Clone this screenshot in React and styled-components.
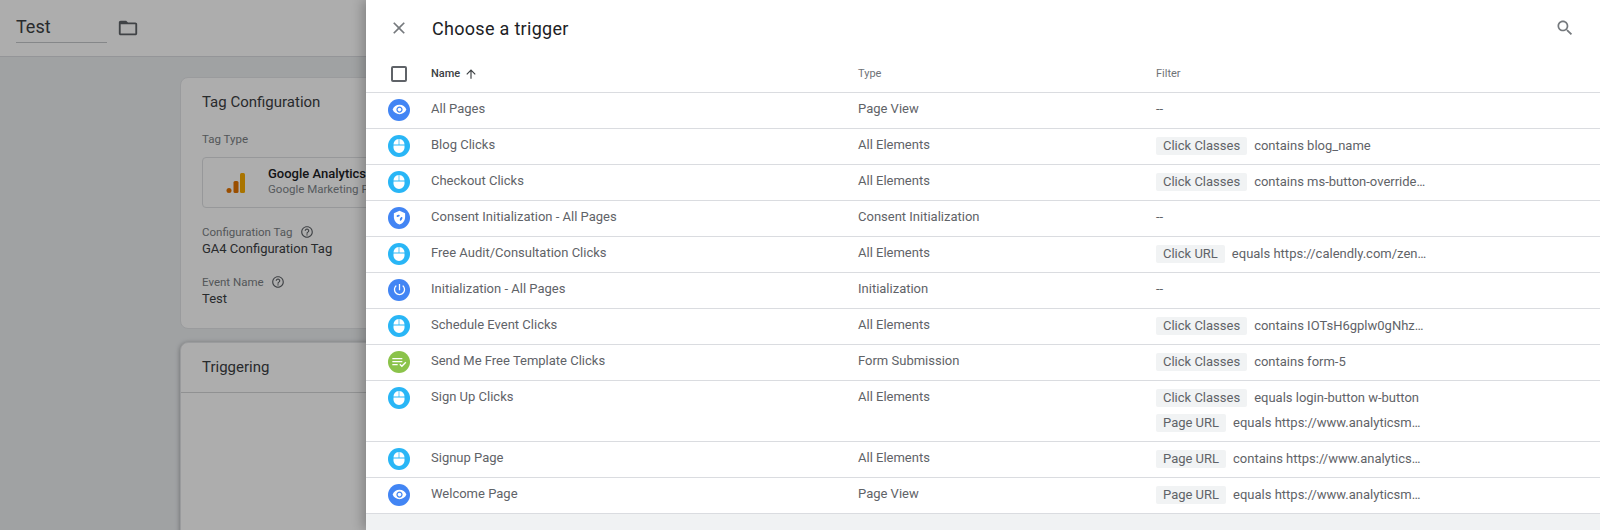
import React from 'react';
import styled, { createGlobalStyle } from 'styled-components';

const Global = createGlobalStyle`
html, body {
    margin: 0;
    height: 100%;
    overflow: hidden;
    background: #eceff1;
    font-family: Roboto, "Liberation Sans", sans-serif;
}
* { box-sizing: border-box; }
`;

const Page = styled.div`
position: relative;
width: 1600px;
height: 530px;
overflow: hidden;
`;

const TopBar = styled.header`
height: 57px;
background: #fff;
border-bottom: 1px solid #dadce0;
padding: 0 0 0 16px;
display: flex;
align-items: center;
gap: 10px;
`;
const NameField = styled.div`
width: 91px;
height: 30px;
border-bottom: 1px solid #c4c7ca;
font-size: 18px;
line-height: 28px;
color: #3c4043;
`;
const Content = styled.main`
padding: 20px 0 0 180px;
display: flex;
flex-direction: column;
gap: 13px;
`;
const Card = styled.section`
width: 700px;
height: ${p => p.$height}px;
background: #fff;
border-radius: 8px;
border: 1px solid #e3e5e7;
box-shadow: ${p => p.$raised ? '0 1px 5px rgba(0,0,0,.35)' : 'none'};
`;
const CardTitle = styled.h2`
margin: 0;
height: ${p => p.$rule ? 50 : 47}px;
padding: 14px 0 0 21px;
font-size: 15px;
line-height: 20px;
font-weight: 400;
color: #3c4043;
border-bottom: ${p => p.$rule ? '1px solid #d4d6d8' : 'none'};
`;
const CardBody = styled.div`
padding: 6px 0 0 21px;
`;
const Label = styled.div`
display: flex;
align-items: center;
gap: 7px;
height: 16px;
font-size: 11.5px;
color: #7b7f84;
`;
const Value = styled.div`
font-size: 13px;
line-height: 18px;
color: #3c4043;
`;
const Field = styled.div`
margin-top: 16px;
`;
const Tile = styled.div`
width: 400px;
height: 51px;
margin-top: 10px;
border: 1px solid #dfe1e3;
border-radius: 4px;
display: flex;
align-items: center;
padding-left: 23px;
gap: 22px;
`;
const TileText = styled.div`
margin-top: -3px;
`;
const TileName = styled.div`
font-size: 13px;
line-height: 16px;
font-weight: 500;
color: #202124;
`;
const TileSub = styled.div`
font-size: 11.5px;
line-height: 15px;
color: #80868b;
`;

const Scrim = styled.div`
position: absolute;
inset: 0;
background: rgba(0, 0, 0, .32);
`;
const Panel = styled.aside`
position: absolute;
top: 0;
bottom: 0;
left: 366px;
right: 0;
background: #f0f2f3;
box-shadow: -4px 0 10px rgba(0,0,0,.22);
display: flex;
flex-direction: column;
`;
const PanelHead = styled.div`
height: 56px;
background: #fff;
display: flex;
align-items: center;
padding: 0 25px 0 23px;
color: #75797d;
`;
const PanelTitle = styled.h1`
margin: 0 0 0 23px;
flex: 1;
font-size: 18px;
letter-spacing: .3px;
font-weight: 400;
color: #202124;
`;
const Table = styled.div`
background: #fff;
`;
const Row = styled.div`
display: grid;
grid-template-columns: 65px 427px 298px 1fr;
align-items: ${p => p.$multi ? 'start' : 'center'};
min-height: ${p => p.$head ? 37 : 36}px;
border-bottom: 1px solid #dadce0;
font-size: 13px;
line-height: 18px;
color: #5f6368;
padding: ${p => p.$multi ? '8px 0 9px' : p.$head ? 0 : '0 0 2px'};
`;
const Cell = styled.div`
margin: -1px 0 1px;
`;
const HeadCell = styled.div`
font-size: 11px;
color: ${p => p.$active ? '#3c4043' : '#6f7377'};
font-weight: ${p => p.$active ? 500 : 400};
display: flex;
align-items: center;
gap: 4px;
`;
const IconCell = styled.div`
display: flex;
justify-content: center;
width: 66px;
margin-top: ${p => p.$multi ? -2 : 0}px;
`;
const Checkbox = styled.span`
width: 16px;
height: 16px;
border: 2px solid #5f6368;
border-radius: 2px;
`;
const Badge = styled.span`
width: 22px;
height: 22px;
border-radius: 50%;
background: ${p => p.$color};
display: flex;
align-items: center;
justify-content: center;
`;
const Filters = styled.div`
display: flex;
flex-direction: column;
gap: 7px;
`;
const FilterLine = styled.div`
display: flex;
align-items: center;
gap: 7px;
white-space: nowrap;
`;
const Chip = styled.span`
background: #f1f3f4;
height: 18px;
line-height: 18px;
padding: 0 7px;
border-radius: 2px;
`;

const Glyph = ({ d, size = 24, color = 'currentColor' }) => (
    <svg width={size} height={size} viewBox="0 0 24 24" fill={color}><path d={d} /></svg>
);

const paths = {
    eye: 'M12 4.5C7 4.5 2.73 7.61 1 12c1.73 4.39 6 7.5 11 7.5s9.27-3.11 11-7.5c-1.73-4.39-6-7.5-11-7.5zM12 17c-2.76 0-5-2.24-5-5s2.24-5 5-5 5 2.24 5 5-2.24 5-5 5zm0-8c-1.66 0-3 1.34-3 3s1.34 3 3 3 3-1.34 3-3-1.34-3-3-3z',
    power: 'M13 3h-2v10h2V3zm4.83 2.17l-1.42 1.42C17.99 7.86 19 9.81 19 12c0 3.87-3.13 7-7 7s-7-3.13-7-7c0-2.19 1.01-4.14 2.58-5.42L6.17 5.17C4.23 6.82 3 9.26 3 12c0 4.97 4.03 9 9 9s9-4.03 9-9c0-2.74-1.23-5.18-3.17-6.83z',
    close: 'M19 6.41L17.59 5 12 10.59 6.41 5 5 6.41 10.59 12 5 17.59 6.41 19 12 13.41 17.59 19 19 17.59 13.41 12z',
    search: 'M15.5 14h-.79l-.28-.27C15.41 12.59 16 11.11 16 9.5 16 5.91 13.09 3 9.5 3S3 5.91 3 9.5 5.91 16 9.5 16c1.61 0 3.09-.59 4.23-1.57l.27.28v.79l5 4.99L20.49 19l-4.99-5zm-6 0C7.01 14 5 11.99 5 9.5S7.01 5 9.5 5 14 7.01 14 9.5 11.99 14 9.5 14z',
    folder: 'M20 6h-8l-2-2H4c-1.1 0-1.99.9-1.99 2L2 18c0 1.1.9 2 2 2h16c1.1 0 2-.9 2-2V8c0-1.1-.9-2-2-2zm0 12H4V8h16v10z',
    up: 'M4 12l1.41 1.41L11 7.83V20h2V7.83l5.58 5.59L20 12l-8-8-8 8z',
    help: 'M11 18h2v-2h-2v2zm1-16C6.48 2 2 6.48 2 12s4.48 10 10 10 10-4.48 10-10S17.52 2 12 2zm0 18c-4.41 0-8-3.59-8-8s3.59-8 8-8 8 3.59 8 8-3.59 8-8 8zm0-14c-2.21 0-4 1.79-4 4h2c0-1.1.9-2 2-2s2 .9 2 2c0 2-3 1.75-3 5h2c0-2.25 3-2.5 3-5 0-2.21-1.79-4-4-4z',
};

const Mouse = () => (
    <svg width="12" height="14" viewBox="0 0 12 14" fill="#fff">
        <path d="M5.6.1C2.5.4.5 2.6.5 5.6h5.1z" />
        <path d="M6.4.1c3.1.3 5.1 2.5 5.1 5.5H6.4z" />
        <path d="M.5 6.4v2.2C.5 11.6 3 14 6 14s5.500-2.400 5.500-5.400V6.400z" />
    </svg>
);

const TriggerIcon = ({ kind }) => {
    if (kind === 'view') return <Badge $color="#4285f4"><Glyph d={paths.eye} size={15} color="#fff" /></Badge>;
    if (kind === 'click') return <Badge $color="#29b6f6"><Mouse /></Badge>;
    if (kind === 'init') return <Badge $color="#4285f4"><Glyph d={paths.power} size={15} color="#fff" /></Badge>;
    if (kind === 'consent') return (
        <Badge $color="#4285f4">
            <svg width="15" height="15" viewBox="0 0 24 24">
                <path fill="#fff" d="M12 1L3 5v6c0 5.55 3.84 10.74 9 12 5.16-1.26 9-6.45 9-12V5l-9-4z" />
                <path fill="#4285f4" d="M8 8.5c1.6-1.3 3.2-1.2 4.2-.2.6.7 0 1.7-1 2.1-1.2.5-2.2 1.2-3.4.4-.7-.5-.5-1.7.2-2.3zM14.5 11.5c1.2-.4 2.3.2 2.2 1.3-.2 1.6-1.4 3.4-2.8 4.2-.9.5-1.6-.3-1.4-1.3.3-1.6.6-3.6 2-4.2z" />
            </svg>
        </Badge>
    );
    return (
        <Badge $color="#8bc34a">
            <svg width="16" height="16" viewBox="0 0 24 24" fill="#fff">
                <path d="M2 6h15v2H2zM2 10.5h15v2H2zM2 15h8v2H2z" />
                <path d="M12.5 16l1.5-1.5 2.3 2.3 5.2-5.3 1.5 1.5-6.7 6.8z" />
            </svg>
        </Badge>
    );
};

const triggers = [
    { name: 'All Pages', kind: 'view', type: 'Page View' },
    { name: 'Blog Clicks', kind: 'click', type: 'All Elements', filters: [['Click Classes', 'contains blog_name']] },
    { name: 'Checkout Clicks', kind: 'click', type: 'All Elements', filters: [['Click Classes', 'contains ms-button-override…']] },
    { name: 'Consent Initialization - All Pages', kind: 'consent', type: 'Consent Initialization' },
    { name: 'Free Audit/Consultation Clicks', kind: 'click', type: 'All Elements', filters: [['Click URL', 'equals https://calendly.com/zen…']] },
    { name: 'Initialization - All Pages', kind: 'init', type: 'Initialization' },
    { name: 'Schedule Event Clicks', kind: 'click', type: 'All Elements', filters: [['Click Classes', 'contains IOTsH6gplw0gNhz…']] },
    { name: 'Send Me Free Template Clicks', kind: 'form', type: 'Form Submission', filters: [['Click Classes', 'contains form-5']] },
    { name: 'Sign Up Clicks', kind: 'click', type: 'All Elements', filters: [['Click Classes', 'equals login-button w-button'], ['Page URL', 'equals https://www.analyticsm…']] },
    { name: 'Signup Page', kind: 'click', type: 'All Elements', filters: [['Page URL', 'contains https://www.analytics…']] },
    { name: 'Welcome Page', kind: 'view', type: 'Page View', filters: [['Page URL', 'equals https://www.analyticsm…']] },
];

const Ga = () => (
    <svg width="20" height="22" viewBox="0 0 20 22">
        <circle cx="3" cy="18.5" r="2.5" fill="#e37400" />
        <rect x="7.5" y="9" width="5" height="12" rx="1.5" fill="#e37400" />
        <rect x="14" y="1" width="5" height="20" rx="1.5" fill="#f9ab00" />
    </svg>
);

export default function App() {
    return (
        <Page>
            <Global />
            <TopBar>
                <NameField>Test</NameField>
                <Glyph d={paths.folder} size={22} color="#5f6368" />
            </TopBar>
            <Content>
                <Card $height={252}>
                    <CardTitle>Tag Configuration</CardTitle>
                    <CardBody>
                        <Label>Tag Type</Label>
                        <Tile>
                            <Ga />
                            <TileText>
                                <TileName>Google Analytics: GA4 Event</TileName>
                                <TileSub>Google Marketing Platform</TileSub>
                            </TileText>
                        </Tile>
                        <Field>
                            <Label>Configuration Tag <Glyph d={paths.help} size={14} color="#5f6368" /></Label>
                            <Value>GA4 Configuration Tag</Value>
                        </Field>
                        <Field>
                            <Label>Event Name <Glyph d={paths.help} size={14} color="#5f6368" /></Label>
                            <Value>Test</Value>
                        </Field>
                    </CardBody>
                </Card>
                <Card $height={300} $raised>
                    <CardTitle $rule>Triggering</CardTitle>
                </Card>
            </Content>
            <Scrim />
            <Panel>
                <PanelHead>
                    <Glyph d={paths.close} size={20} />
                    <PanelTitle>Choose a trigger</PanelTitle>
                    <Glyph d={paths.search} size={20} />
                </PanelHead>
                <Table>
                    <Row $head>
                        <IconCell><Checkbox /></IconCell>
                        <HeadCell $active>Name <Glyph d={paths.up} size={14} color="#3c4043" /></HeadCell>
                        <HeadCell>Type</HeadCell>
                        <HeadCell>Filter</HeadCell>
                    </Row>
                    {triggers.map(t => {
                        const multi = t.filters && t.filters.length > 1;
                        return (
                            <Row key={t.name} $multi={multi}>
                                <IconCell $multi={multi}><TriggerIcon kind={t.kind} /></IconCell>
                                <Cell>{t.name}</Cell>
                                <Cell>{t.type}</Cell>
                                {t.filters ? (
                                    <Filters>
                                        {t.filters.map(([chip, text]) => (
                                            <FilterLine key={chip}><Chip>{chip}</Chip>{text}</FilterLine>
                                        ))}
                                    </Filters>
                                ) : <Cell>--</Cell>}
                            </Row>
                        );
                    })}
                </Table>
            </Panel>
        </Page>
    );
}
